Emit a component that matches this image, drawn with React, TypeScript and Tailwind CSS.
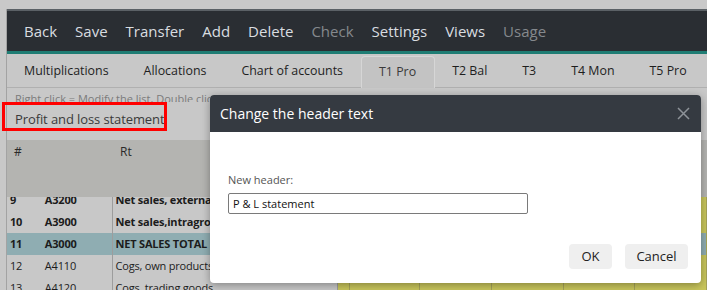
import React from "react";

const navItems: { label: string; disabled?: boolean }[] = [
  { label: "Back" },
  { label: "Save" },
  { label: "Transfer" },
  { label: "Add" },
  { label: "Delete" },
  { label: "Check", disabled: true },
  { label: "Settings" },
  { label: "Views" },
  { label: "Usage", disabled: true },
];

const tabs = ["Multiplications", "Allocations", "Chart of accounts", "T1 Pro", "T2 Bal", "T3", "T4 Mon", "T5 Pro"];

const rows = [
  { n: "9", acc: "A3200", name: "Net sales, external", bold: true },
  { n: "10", acc: "A3900", name: "Net sales,intragroup", bold: true },
  { n: "11", acc: "A3000", name: "NET SALES TOTAL", bold: true, hl: true },
  { n: "12", acc: "A4110", name: "Cogs, own products", bold: false },
  { n: "13", acc: "A4120", name: "Cogs, trading goods", bold: false },
];

const yellowCols = ["w-[12px]", "w-[71px]", "w-[72px]", "w-[72px]", "w-[72px]", "w-[72px]"];

export default function App() {
  return (
    <div
      className="relative w-[707px] h-[290px] overflow-hidden bg-[#c8c8c8] text-[#2b2b2b]"
      style={{ fontFamily: '"Open Sans", "DejaVu Sans", sans-serif' }}
    >
      {/* top strip */}
      <div className="h-[9px] bg-[#c9c9c9]" />
      {/* page */}
      <div className="ml-[6px] border-l border-[#a3a3a3]">
        {/* nav */}
        <div className="h-[45px] bg-[#2a2e33] border-t-[2px] border-[#5b6166] border-b-[3px] border-b-[#1f7d74] flex items-center pl-[17px] gap-[18px] text-[15px] whitespace-nowrap">
          {navItems.map((it) => (
            <span key={it.label} className={it.disabled ? "text-[#85898d]" : "text-[#d9dde0]"}>
              {it.label}
            </span>
          ))}
        </div>
        {/* tabs */}
        <div className="h-[34px] flex items-end border-b border-[#b0b0b0] bg-[#c8c8c8] text-[12.4px] text-[#1e1e1e] whitespace-nowrap">
          {tabs.map((t) => (
            <div
              key={t}
              className={
                "shrink-0 flex items-center pl-[17px] pr-[18px] " +
                (t === "T1 Pro"
                  ? "h-[32px] bg-[#c3c3c3] border border-b-0 border-[#d6d6d6] rounded-t-[4px] -mb-px pl-[16px] pr-[17px] text-[#3a3a3a]"
                  : "h-[31px]")
              }
            >
              {t}
            </div>
          ))}
        </div>
        {/* hint */}
        <div className="h-[14px] overflow-hidden pl-[8px] text-[11px] leading-[22px] text-[#7b7b7b] -mt-[6px] pt-[6px] box-content whitespace-nowrap">
          Right click = Modify the list, Double click = Expand from
        </div>
        {/* title */}
        <div className="h-[38px] pl-[8px] pt-[8px] text-[13px] tracking-[-0.1px] text-[#3a3a3a]">Profit and loss statement</div>
        {/* table */}
        <div className="relative h-[150px] overflow-hidden">
          <div className="absolute top-0 left-0 right-0 z-10 h-[57px] bg-[#b4b4b1] flex text-[12px] text-[#2a2a2a]">
            <div className="w-[106px] pl-[7px] pt-[3px]">#</div>
            <div className="pl-[7px] pt-[3px]">Rt</div>
          </div>
          <div className="pt-[49px]">
            {rows.map((r) => (
              <div
                key={r.n}
                className={
                  "flex h-[22px] text-[11px] tracking-[-0.2px] text-[#1c1c1c] " +
                  (r.bold ? "font-bold " : "") +
                  (r.hl ? "bg-[#8fadb2]" : "bg-[#c8c8c8]")
                }
              >
                <div className="w-[37px] pl-[3px] flex items-center">{r.n}</div>
                <div className="w-[69px] pl-[1px] flex items-center border-r border-[#9d9d9d]">{r.acc}</div>
                <div className="w-[226px] pl-[3px] flex items-center whitespace-nowrap overflow-hidden border-r border-[#9d9d9d]">
                  {r.name}
                </div>
                {yellowCols.map((w, i) => (
                  <div
                    key={i}
                    className={w + " border-r border-[#a5a35a] " + (r.hl ? "bg-[#8fadb2]" : "bg-[#c9c65c]")}
                  />
                ))}
              </div>
            ))}
          </div>
        </div>
      </div>

      {/* annotation */}
      <div className="absolute left-[2px] top-[102px] w-[165px] h-[29px] border-[3px] border-[#ff0000]" />

      {/* modal */}
      <div className="absolute z-20 left-[210px] top-[95px] w-[491px] h-[188px] bg-white rounded-[4px] shadow-[0_2px_8px_rgba(0,0,0,0.35)] overflow-hidden flex flex-col">
        <div className="h-[37px] shrink-0 bg-[#353a41] flex items-center justify-between pl-[10px] pr-[11px]">
          <span className="text-[14px] text-white">Change the header text</span>
          <svg width="13" height="13" viewBox="0 0 13 13" className="text-[#8e9399]">
            <path d="M1 1L12 12M12 1L1 12" stroke="currentColor" strokeWidth="1.5" />
          </svg>
        </div>
        <div className="flex-1 pl-[18px] pr-[13px] pt-[40px]">
          <div className="text-[11px] leading-[16px] text-[#555555] mb-[5px]">New header:</div>
          <input
            readOnly
            value="P & L statement"
            className="block w-[300px] h-[21px] border border-[#7a7a7a] rounded-[2px] px-[4px] text-[11px] text-[#111] outline-none"
            style={{ fontFamily: '"Open Sans", sans-serif' }}
          />
          <div className="flex justify-end gap-[13px] mt-[30px]">
            <button className="w-[43px] h-[25px] bg-[#efefef] rounded-[4px] text-[13px] text-[#222]">OK</button>
            <button className="w-[63px] h-[25px] bg-[#efefef] rounded-[4px] text-[13px] text-[#222]">Cancel</button>
          </div>
        </div>
      </div>
    </div>
  );
}
